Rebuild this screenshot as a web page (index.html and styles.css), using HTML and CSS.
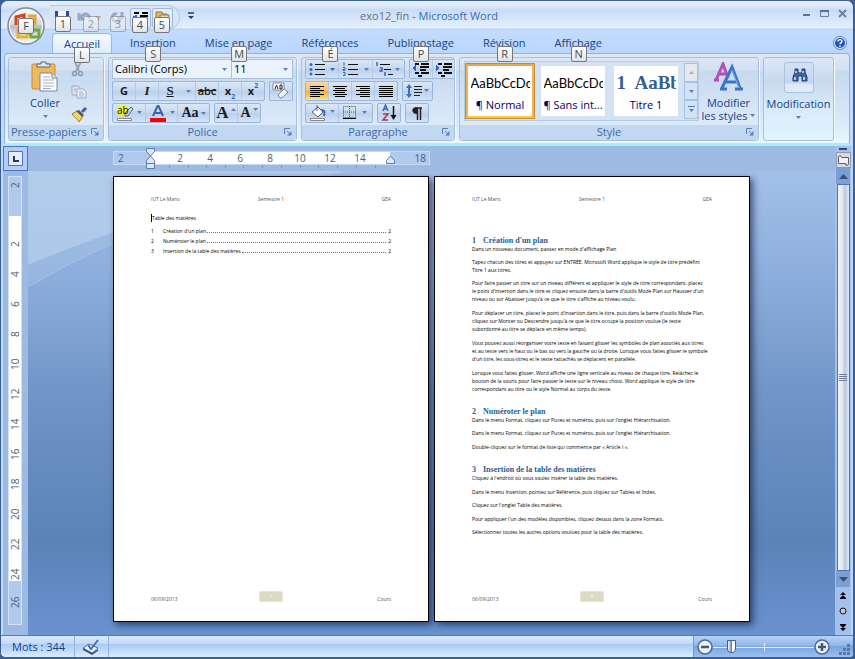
FILE: index.html
```html
<!DOCTYPE html>
<html lang="fr">
<head>
<meta charset="utf-8">
<title>exo12_fin - Microsoft Word</title>
<link rel="stylesheet" href="styles.css">
</head>
<body>
<div class="window">
  <header class="titlebar">
    <button class="office" aria-label="Bouton Office">
      <svg width="40" height="40" viewBox="0 0 40 40">
        <defs><linearGradient id="orb" x1="0" y1="0" x2="0" y2="1"><stop offset="0" stop-color="#fbfcfe"/><stop offset=".45" stop-color="#d3d9e3"/><stop offset=".5" stop-color="#b4bdcc"/><stop offset="1" stop-color="#f6f9fd"/></linearGradient></defs>
        <circle cx="20" cy="20" r="18" fill="url(#orb)" stroke="#7c8aa3" stroke-width="1.5"/>
        <circle cx="20" cy="20" r="16.5" fill="none" stroke="#fff"/>
        <g fill="none" stroke-width="3">
          <path d="M10 19v-8l8-2v4" stroke="#d8431c"/>
          <path d="M22 10h7v9" stroke="#e8a33a"/>
          <path d="M12 22v9h9v-8" stroke="#f2b21c"/>
          <path d="M24 24h9v7h-8z" stroke="#6cae35"/>
        </g>
      </svg>
      <span class="key">F</span>
    </button>
    <div class="qat">
      <button aria-label="Enregistrer"><svg width="16" height="16"><path d="M1 1h14v14H1z" fill="#3d3fae"/><path d="M4 1h8v7H4z" fill="#f4f6fb"/><path d="M4 11h8v4H4z" fill="#b9c6e4"/></svg><span class="key">1</span></button>
      <button class="off wide" aria-label="Annuler"><svg width="24" height="16"><path d="M2 3v6h6M3 8c4-6 10-5 9 1" fill="none" stroke="#9aa9c3" stroke-width="3"/><path d="M18 6h6l-3 4z" fill="#b3ad9c"/></svg><span class="key">2</span></button>
      <button class="off" aria-label="Rétablir"><svg width="16" height="16"><path d="M13 2v6H8M3 8c0-3 3-5 5-4M3 8c1 4 7 5 9 2" fill="none" stroke="#9aa9c3" stroke-width="3"/></svg><span class="key">3</span></button>
      <button class="framed" aria-label="Retrait"><svg width="18" height="16" shape-rendering="crispEdges"><path d="M2 3h5M10 3h6M8 6h8M8 9h8M2 12h14" stroke="#000" stroke-width="2"/><path d="M1 7h4M4 5v5" stroke="#2f62c8" stroke-width="2"/></svg><span class="key">4</span></button>
      <button class="framed" aria-label="Ouvrir"><svg width="16" height="16"><path d="M2 2h6l1 2h4v8H2z" fill="#e7b85a" stroke="#a9711c"/><path d="M6 5h9v8H6z" fill="#f7dc97" stroke="#6b7fae"/></svg><span class="key">5</span></button>
    </div>
    <button class="more" aria-label="Personnaliser"><svg width="7" height="8"><path d="M0 1h6" stroke="#1c3d78" stroke-width="1.5"/><path d="M0 4h6l-3 3z" fill="#1c3d78"/></svg></button>
    <h1><span>exo12_fin</span> - Microsoft Word</h1>
    <div class="sys">
      <button aria-label="Réduire"><svg width="10" height="10"><path d="M1 6h7" stroke="#5d6f8f" stroke-width="2"/></svg></button>
      <button aria-label="Agrandir"><svg width="10" height="10"><path d="M.5 1.500h8v6h-8z" fill="none" stroke="#6f809d"/><path d="M0 2h9" stroke="#5d6f8f" stroke-width="2"/></svg></button>
      <button aria-label="Fermer"><svg width="10" height="10"><path d="M1 1l7 7M8 1l-7 7" stroke="#6f809d" stroke-width="2"/></svg></button>
    </div>
  </header>

  <nav class="tabs">
    <button class="on">Accueil<span class="key">L</span></button>
    <button>Insertion<span class="key">S</span></button>
    <button>Mise en page<span class="key">M</span></button>
    <button>Références<span class="key">É</span></button>
    <button>Publipostage<span class="key">P</span></button>
    <button>Révision<span class="key">R</span></button>
    <button>Affichage<span class="key">N</span></button>
    <button class="help" aria-label="Aide"><svg width="14" height="14"><circle cx="7" cy="7" r="6.500" fill="#dfeaf9" stroke="#5a7fc4"/><circle cx="7" cy="7" r="5" fill="#1f55c8"/><path d="M5 5.500c0-2.500 4-2.500 4-.3 0 1.500-2 1.300-2 3M7 9.500v1.500" fill="none" stroke="#fff" stroke-width="1.400"/></svg></button>
  </nav>

  <section class="ribbon">
    <div class="group clip">
      <div class="body">
        <button class="big">
          <svg width="28" height="31"><rect x="1" y="3" width="23" height="25" rx="1" fill="#edb95b" stroke="#c68e35"/><path d="M6 6V3h4V1h5v2h4v3z" fill="#e3e6ea" stroke="#5f646c"/><path d="M9 12h12l5 5v13H9z" fill="#fff" stroke="#7384a6"/><path d="M21 12v5h5" fill="#dfe6f2" stroke="#7384a6"/><path d="M12 16h7M12 19h11M12 22h11M12 25h11M12 27.500h8" stroke="#a3adbf"/></svg>
          Coller
          <svg class="car" width="5" height="3"><path d="M0 0h5L2.500 3z"/></svg>
        </button>
        <div class="stack">
          <button aria-label="Couper"><svg width="14" height="15"><path d="M4 0l4 9M10 0L5 9" stroke="#9aa4b6" stroke-width="2"/><circle cx="3.500" cy="11.500" r="2" fill="none" stroke="#8b97b0" stroke-width="1.500"/><circle cx="9.500" cy="11.500" r="2" fill="none" stroke="#8b97b0" stroke-width="1.500"/></svg></button>
          <button aria-label="Copier"><svg width="16" height="14"><path d="M1 1h6l2 2v7H1z" fill="#dde5f1" stroke="#9eabc4"/><path d="M6 4h6l3 3v6H6z" fill="#eef3fa" stroke="#9eabc4"/><path d="M8 7h4M8 9h5M8 11h5M3 4h2M3 6h2" stroke="#9eabc4"/></svg></button>
          <button aria-label="Reproduire la mise en forme"><svg width="17" height="15"><path d="M1 7l5-3 6 5-4 6C6 11 3 10 1 7z" fill="#f3d766" stroke="#a67c1c"/><path d="M8 3l5 5-2 2-6-6z" fill="#555b68"/><path d="M11 5l4-4" stroke="#4b57a0" stroke-width="3"/></svg></button>
        </div>
      </div>
      <footer>Presse-papiers<button class="dlg" aria-label="Options"><svg width="8" height="8"><path d="M.5 6V.5H6M3 3l3 3" fill="none" stroke="#5f7fae"/><path d="M7.500 3v4.500H3L7.500 3z" fill="#5f7fae"/></svg></button></footer>
    </div>

    <div class="group police">
      <div class="body rows">
        <div class="row combos">
          <label class="combo"><select aria-label="Police"><option>Calibri (Corps)</option></select><svg class="car" width="5" height="3"><path d="M0 0h5L2.500 3z"/></svg></label>
          <label class="combo size"><select aria-label="Taille"><option>11</option></select><svg class="car" width="5" height="3"><path d="M0 0h5L2.500 3z"/></svg></label>
        </div>
        <div class="row">
          <div class="set">
            <button class="b">G</button><button class="i">I</button><button class="u"><u>S</u></button><button class="arr" aria-label="Soulignement"><svg class="car" width="5" height="3"><path d="M0 0h5L2.500 3z"/></svg></button><button class="s"><s>abc</s></button><button class="b">x<sub>2</sub></button><button class="b">x<sup>2</sup></button>
          </div>
          <div class="set"><button aria-label="Effacer la mise en forme"><svg width="18" height="18"><path d="M1 1h11v7H1z" fill="#fff" stroke="#7c8baa"/><path d="M3 7l1.500-4L6 7M8 3v4h2V3z" stroke="#222" fill="none"/><path d="M6 13l6-6 4 3-6 6H8z" fill="#eef1f7" stroke="#7684a4"/></svg></button></div>
        </div>
        <div class="row">
          <div class="set">
            <button class="w32" aria-label="Surbrillance"><svg width="26" height="17"><path d="M1 1h11v9H1z" fill="#f8f22c"/><path d="M9 8l6-6 2 2-5 7H9z" fill="#cdd8ea" stroke="#53627e"/><path d="M1.500 13.500h14v2h-14z" fill="#fff" stroke="#888"/><path d="M21 6h5l-2.500 3z" fill="#5b80b8"/><text x="1" y="9" class="tiny">ab</text></svg></button>
            <button class="w32" aria-label="Couleur de police"><svg width="26" height="17"><path d="M4 11L8.500 1h1L14 11M6 8h6" fill="none" stroke="#3c63a8" stroke-width="2"/><path d="M1 13h16v4H1z" fill="#f00"/><path d="M21 6h5l-2.500 3z" fill="#5b80b8"/></svg></button>
            <button class="w32 serif">Aa<svg class="car" width="5" height="3"><path d="M0 0h5L2.500 3z"/></svg></button>
          </div>
          <div class="set">
            <button class="serif grow">A<svg class="car tip" width="5" height="3"><path d="M0 3h5L2.500 0z"/></svg></button>
            <button class="serif shrink">A<svg class="car tip" width="5" height="3"><path d="M0 0h5L2.500 3z"/></svg></button>
          </div>
        </div>
      </div>
      <footer>Police<button class="dlg" aria-label="Options"><svg width="8" height="8"><path d="M.5 6V.5H6M3 3l3 3" fill="none" stroke="#5f7fae"/><path d="M7.500 3v4.500H3L7.500 3z" fill="#5f7fae"/></svg></button></footer>
    </div>

    <div class="group para">
      <div class="body rows">
        <div class="row">
          <div class="set">
            <button class="w32" aria-label="Puces"><svg width="26" height="14"><path d="M6 2.500h10M6 7.500h10M6 12.500h10" stroke="#111"/><g fill="#3d66b2"><circle cx="2" cy="2.500" r="1.500"/><circle cx="2" cy="7.500" r="1.500"/><circle cx="2" cy="12" r="1.500"/><path d="M21 6h5l-2.500 3z"/></g></svg></button>
            <button class="w35" aria-label="Numérotation"><svg width="28" height="15"><path d="M6 2.500h10M6 7.500h10M6 12.500h10" stroke="#111"/><path d="M2 0v4M1 5.500h2v2H1v1h2M1 10.500h2v3H1" fill="none" stroke="#3d66b2"/><path d="M22 6h5l-2.500 3z" fill="#5b80b8"/></svg></button>
            <button class="w32" aria-label="Liste à plusieurs niveaux"><svg width="28" height="15"><path d="M5 2.500h10M9 7.500h7M13 12.500h5" stroke="#111"/><path d="M2 0v4M5 6h2v3H5v-1M10 10v4" fill="none" stroke="#3d66b2" stroke-width="1.500"/><path d="M20 6h5l-2.500 3z" fill="#5b80b8"/></svg></button>
          </div>
          <div class="set">
            <button aria-label="Diminuer le retrait"><svg width="18" height="15" shape-rendering="crispEdges"><path d="M3 2h4M9 2h8M8 5h9M8 8h6M3 11h4M9 11h8M6 14h4" stroke="#111" stroke-width="2"/><path d="M0 6l4-3v6z" fill="#2f62c8"/></svg></button>
            <button aria-label="Augmenter le retrait"><svg width="18" height="15" shape-rendering="crispEdges"><path d="M3 2h4M9 2h8M8 5h9M8 8h6M3 11h4M9 11h8M6 14h4" stroke="#111" stroke-width="2"/><path d="M5 6L1 3v6z" fill="#2f62c8"/></svg></button>
          </div>
        </div>
        <div class="row">
          <div class="set">
            <button class="lit" aria-label="Gauche"><svg width="14" height="12" shape-rendering="crispEdges"><path d="M0 1h14M0 3h10M0 5h14M0 7h10M0 9h14M0 11h10" stroke="#000"/></svg></button>
            <button aria-label="Centrer"><svg width="14" height="12" shape-rendering="crispEdges"><path d="M0 1h14M2 3h10M0 5h14M2 7h10M0 9h14M2 11h10" stroke="#000"/></svg></button>
            <button aria-label="Droite"><svg width="14" height="12" shape-rendering="crispEdges"><path d="M0 1h14M4 3h10M0 5h14M4 7h10M0 9h14M4 11h10" stroke="#000"/></svg></button>
            <button aria-label="Justifier"><svg width="14" height="12" shape-rendering="crispEdges"><path d="M0 1h14M0 3h14M0 5h14M0 7h14M0 9h14M0 11h14" stroke="#000"/></svg></button>
          </div>
          <div class="set"><button class="w29" aria-label="Interligne"><svg width="24" height="16"><path d="M0 5l3-4 3 4H4v6h2l-3 4-3-4h2V5z" fill="#3d6fc4"/><path d="M8 3.500h8M8 6.500h8M8 9.500h8M8 12.500h6" stroke="#222"/><path d="M18 6h5l-2.500 3z" fill="#5b80b8"/></svg></button></div>
        </div>
        <div class="row">
          <div class="set">
            <button class="w32" aria-label="Trame de fond"><svg width="27" height="17"><path d="M3 7l6-5 5 5-5 5z" fill="#fff" stroke="#4e5d7c"/><path d="M8 6V0" stroke="#4e5d7c"/><path d="M12 5c4 0 4 2 3 6" fill="none" stroke="#3b69b8" stroke-width="2"/><path d="M1.500 13.500h14v2h-14z" fill="#fff" stroke="#888"/><path d="M21 5h5l-2.500 3z" fill="#5b80b8"/></svg></button>
            <button class="w35" aria-label="Bordures"><svg width="25" height="14"><path d="M.5 .5h12v11H.5zM6.500 0v12M0 6h13" fill="none" stroke="#44506a" stroke-dasharray="1 1"/><path d="M0 12.500h13" stroke="#000"/><path d="M19 5h5l-2.500 3z" fill="#5b80b8"/></svg></button>
          </div>
          <div class="set"><button aria-label="Trier"><svg width="17" height="18"><path d="M2 7l2.500-6L7 7M3 5h3" fill="none" stroke="#3d66b2" stroke-width="1.500"/><path d="M2 10h5l-5 6h5" fill="none" stroke="#a33b4c" stroke-width="1.500"/><path d="M12.500 2v11" stroke="#111" stroke-width="1.500"/><path d="M9.500 11h6l-3 5z" fill="#111"/></svg></button></div>
          <div class="set"><button aria-label="Afficher tout"><svg width="12" height="13"><path d="M6.500 1v12M9.500 1v12M5 1h6" stroke="#222" stroke-width="1.500"/><path d="M6 0C-.5 0 0 7 6 7z" fill="#222"/></svg></button></div>
        </div>
      </div>
      <footer>Paragraphe<button class="dlg" aria-label="Options"><svg width="8" height="8"><path d="M.5 6V.5H6M3 3l3 3" fill="none" stroke="#5f7fae"/><path d="M7.500 3v4.500H3L7.500 3z" fill="#5f7fae"/></svg></button></footer>
    </div>

    <div class="group style">
      <div class="body">
        <div class="gallery">
          <button class="sty on"><span class="demo">AaBbCcDc</span><span>¶ Normal</span></button>
          <button class="sty"><span class="demo">AaBbCcDc</span><span>¶ Sans int...</span></button>
          <button class="sty"><span class="demo title">1&nbsp; AaBb</span><span>Titre 1</span></button>
          <div class="spin">
            <button class="dim" aria-label="Précédent"><svg class="car" width="5" height="3"><path d="M0 3h5L2.500 0z"/></svg></button>
            <button aria-label="Suivant"><svg class="car" width="5" height="3"><path d="M0 0h5L2.500 3z"/></svg></button>
            <button aria-label="Tous les styles"><svg class="car" width="7" height="7"><path d="M0 0h7v1H0zM1 3h5L3.500 6z"/></svg></button>
          </div>
        </div>
        <button class="big mod">
          <svg width="30" height="29"><path d="M2 18L9 2l5 14M5 12h7M0 18h5" fill="none" stroke="#b04fb8" stroke-width="3"/><path d="M8 26L18 5l8 21M12 20h11M6 27h7M21 27h8" fill="none" stroke="#3d74c6" stroke-width="3"/><path d="M18 8l7 18" stroke="#86b0ea"/></svg>
          Modifier
          <span>les styles <svg class="car" width="5" height="3"><path d="M0 0h5L2.500 3z"/></svg></span>
        </button>
      </div>
      <footer>Style<button class="dlg" aria-label="Options"><svg width="8" height="8"><path d="M.5 6V.5H6M3 3l3 3" fill="none" stroke="#5f7fae"/><path d="M7.500 3v4.500H3L7.500 3z" fill="#5f7fae"/></svg></button></footer>
    </div>

    <div class="group edit">
      <button class="big">
        <span class="tile"><svg width="16" height="14"><path d="M3 1h3v3l1 1h2l1-1V1h3v3l2 5v4h-5V8H6v5H1V9l2-5z" fill="#41639f" stroke="#274073"/><path d="M3 9v3M12 9v3M4 3v2M11 3v2" stroke="#dbe6f7" stroke-width="1.500"/></svg></span>
        Modification
        <svg class="car" width="5" height="3"><path d="M0 0h5L2.500 3z"/></svg>
      </button>
    </div>
  </section>

  <main>
    <aside class="left">
      <button class="tabsel" aria-label="Tabulation"><svg width="15" height="15"><path d="M.5 .5h14v14H.5z" fill="#e6effb" stroke="#4a74c8"/><path d="M6 5v5h5" fill="none" stroke="#1f3b66" stroke-width="2"/></svg></button>
      <div class="vruler">
        <div class="margin"><span>2</span></div>
        <div class="live"><span>2</span><span>4</span><span>6</span><span>8</span><span>10</span><span>12</span><span>14</span><span>16</span><span>18</span><span>20</span><span>22</span><span>24</span></div>
        <div class="margin end"><span>26</span></div>
      </div>
    </aside>

    <div class="center">
      <div class="hbar">
        <div class="hwrap">
          <div class="hruler">
            <span class="margin">2</span>
            <div class="live"><span>2</span><span>4</span><span>6</span><span>8</span><span>10</span><span>12</span><span>14</span></div>
            <span class="margin end">18</span>
            <svg class="marks" width="317" height="22"><g stroke="#8a97ad"><path d="M56.500 17v3M75.500 17v3M93.500 17v3M112.500 17v3M130.500 17v3M149.500 17v3M168.500 17v3M187.500 17v3M205.500 17v3M224.500 17v3M243.500 17v3M262.500 17v3"/></g><g fill="#dfe8f5" stroke="#5a7cb4"><path d="M33.500 .5h8v3l-4 4.500-4-4.500z"/><path d="M33.500 15.500v-3l4-4.500 4 4.500v3z"/><path d="M33.500 15.500h8v5h-8z"/><path d="M273.500 15.500v-3l4-4.500 4 4.500v3z"/></g></svg>
          </div>
        </div>
      </div>
      <div class="desk">
        <svg class="swoosh" width="420" height="116"><path d="M0 0h320Q150 32 0 94z" fill="#b7d0ec" opacity=".75"/><path d="M0 94Q150 32 320 0h40Q150 26 0 116z" fill="#a3bfe4" opacity=".5"/><path d="M0 116Q150 26 360 0" fill="none" stroke="#b4cdf0" opacity=".6"/></svg>
        <article class="page">
          <div class="head"><span>IUT Le Mans</span><span>Semestre 1</span><span>GEA</span></div>
          <div class="text">
            <p class="tochead"><i></i>Table des matières</p>
            <ol class="toc">
              <li><span>1</span><a href="#s1">Création d'un plan</a><b></b><span>2</span></li>
              <li><span>2</span><a href="#s2">Numéroter le plan</a><b></b><span>2</span></li>
              <li><span>3</span><a href="#s3">Insertion de la table des matières</a><b></b><span>2</span></li>
            </ol>
          </div>
          <div class="foot"><span>06/09/2013</span><span class="num">1</span><span>Cours</span></div>
        </article>
        <article class="page">
          <div class="head"><span>IUT Le Mans</span><span>Semestre 1</span><span>GEA</span></div>
          <div class="text two">
            <h2 id="s1"><span>1</span>Création d'un plan</h2>
            <p class="tight">Dans un nouveau document, passez en mode d'affichage Plan</p>
            <p class="tight">Tapez chacun des titres et appuyez sur ENTRÉE. Microsoft Word applique le style de titre prédéfini<br>Titre 1 aux titres.</p>
            <p>Pour faire passer un titre sur un niveau différent et appliquer le style de titre correspondant, placez<br>le point d'insertion dans le titre et cliquez ensuite dans la barre d'outils Mode Plan sur Hausser d'un<br>niveau ou sur Abaisser jusqu'à ce que le titre s'affiche au niveau voulu.</p>
            <p>Pour déplacer un titre, placez le point d'insertion dans le titre, puis dans la barre d'outils Mode Plan,<br>cliquez sur Monter ou Descendre jusqu'à ce que le titre occupe la position voulue (le texte<br>subordonné au titre se déplace en même temps).</p>
            <p>Vous pouvez aussi réorganiser votre texte en faisant glisser les symboles de plan associés aux titres<br>et au texte vers le haut ou le bas ou vers la gauche ou la droite. Lorsque vous faites glisser le symbole<br>d'un titre, les sous-titres et le texte rattachés se déplacent en parallèle.</p>
            <p>Lorsque vous faites glisser, Word affiche une ligne verticale au niveau de chaque titre. Relâchez le<br>bouton de la souris pour faire passer le texte sur le niveau choisi. Word applique le style de titre<br>correspondant au titre ou le style Normal au corps du texte.</p>
            <h2 id="s2"><span>2</span>Numéroter le plan</h2>
            <p class="tight">Dans le menu Format, cliquez sur Puces et numéros, puis sur l'onglet Hiérarchisation.</p>
            <p>Dans le menu Format, cliquez sur Puces et numéros, puis sur l'onglet Hiérarchisation.</p>
            <p>Double-cliquez sur le format de liste qui commence par « Article I ».</p>
            <h2 id="s3"><span>3</span>Insertion de la table des matières</h2>
            <p>Cliquez à l'endroit où vous voulez insérer la table des matières.</p>
            <p class="tight">Dans le menu Insertion, pointez sur Référence, puis cliquez sur Tables et Index.</p>
            <p>Cliquez sur l'onglet Table des matières.</p>
            <p class="tight">Pour appliquer l'un des modèles disponibles, cliquez dessus dans la zone Formats.</p>
            <p>Sélectionnez toutes les autres options voulues pour la table des matières.</p>
          </div>
          <div class="foot"><span>06/09/2013</span><span class="num">2</span><span>Cours</span></div>
        </article>
      </div>
    </div>

    <aside class="scroll">
      <span class="split"></span>
      <button class="view" aria-label="Règle"><svg width="13" height="13"><path d="M1.500 2.500l2-1 1 2h7v7l-2 1-1-2h-7z" fill="#f7f1f4" stroke="#5b5f72"/><path d="M7 9l3 3" stroke="#5b5f72"/></svg></button>
      <button class="up" aria-label="Haut"><svg width="9" height="5"><path d="M0 5h9L4.500 0z" fill="#3c4f7c"/></svg></button>
      <div class="thumb"><span></span></div>
      <button class="up" aria-label="Bas"><svg width="9" height="5"><path d="M0 0h9L4.500 5z" fill="#3c4f7c"/></svg></button>
      <button class="nav" aria-label="Page précédente"><svg width="6" height="7"><path d="M3 0l3 3H0zM3 3l3 3H0zM0 6h6v1H0z"/></svg></button>
      <button class="nav" aria-label="Objet"><svg width="8" height="8"><circle cx="4" cy="4" r="3" fill="#c9c9c9" stroke="#111"/></svg></button>
      <button class="nav" aria-label="Page suivante"><svg width="6" height="7"><path d="M0 0h6v1H0zM0 1h6L3 4zM0 4h6L3 7z"/></svg></button>
    </aside>
  </main>

  <footer class="status">
    <button class="words">Mots : 344</button>
    <button class="proof" aria-label="Vérification"><svg width="18" height="16"><path d="M1 9l6-4 9 4-6 5z" fill="#f3f6fc" stroke="#5a6c96"/><path d="M1 10l9 5 6-4" fill="none" stroke="#3c4f7c" stroke-width="1.500"/><path d="M6 6l3 4 7-9" fill="none" stroke="#3f6fd0" stroke-width="2"/></svg></button>
    <div class="zoom">
      <button aria-label="Zoom arrière"><svg width="16" height="16"><circle cx="8" cy="8" r="7" fill="#e9f1fc" stroke="#4c689c" stroke-width="1.500"/><path d="M4 8h8" stroke="#44577f" stroke-width="2.500"/></svg></button>
      <input type="range" aria-label="Zoom" min="0" max="100" value="15">
      <button aria-label="Zoom avant"><svg width="16" height="16"><circle cx="8" cy="8" r="7" fill="#e9f1fc" stroke="#4c689c" stroke-width="1.500"/><path d="M4 8h8M8 4v8" stroke="#44577f" stroke-width="2.500"/></svg></button>
      <svg class="grip" width="11" height="11"><path d="M8 0h3v3H8zM4 4h3v3H4zM8 4h3v3H8zM0 8h3v3H0zM4 8h3v3H4zM8 8h3v3H8z" fill="#5877ab"/></svg>
    </div>
  </footer>
</div>
</body>
</html>
```
FILE: styles.css
```css
* { box-sizing: border-box; margin: 0; padding: 0; }
html, body { height: 100%; }
body {
  background: #3d6191;
  font: 11px/14px "Open Sans", "Noto Sans", sans-serif;
  color: #15428b;
}
button { font: inherit; color: inherit; background: none; border: 0; }
svg { display: block; }
.car { fill: #5b80b8; flex: none; }
.tiny { font: 10px "Open Sans", sans-serif; fill: #111; }

.window {
  height: 100vh;
  display: flex;
  flex-direction: column;
  border: 1px solid #3b5f94;
  border-width: 1px 2px 2px 1px;
  border-radius: 8px 8px 6px 6px;
  overflow: hidden;
  background: #bfdbff;
}

/* title bar */
.titlebar {
  position: relative;
  z-index: 3;
  height: 29px;
  flex: none;
  display: flex;
  align-items: flex-start;
  background: linear-gradient(#e8f0fb, #dbe7f8 20%, #c9dcf5 30%, #e3effd 92%, #a9cbf3);
}
.titlebar h1 {
  position: absolute;
  left: 0;
  right: 0;
  top: 8px;
  padding-left: 4px;
  text-align: center;
  font-size: 11px;
  font-weight: 400;
  color: #3c68b4;
  pointer-events: none;
}
.titlebar h1 span { color: #696f7c; }
.key {
  position: absolute;
  width: 16px;
  height: 16px;
  line-height: 14px;
  text-align: center;
  color: #4a4a4a;
  background: linear-gradient(#fff, #dfe3ea);
  border: 1px solid #767676;
  border-radius: 2px;
}
.office { position: relative; margin: 5px 0 0 5px; width: 40px; height: 40px; }
.office .key { left: 12px; top: 12px; }
.qat {
  display: flex;
  gap: 1px;
  height: 25px;
  margin: 4px 0 0 4px;
  padding: 2px 6px 0 2px;
  border: 1px solid #b5c9e6;
  border-left: 0;
  border-radius: 0 13px 13px 0;
  background: #d7e5f7;
}
.qat button { position: relative; width: 22px; height: 20px; padding: 1px 2px; }
.qat .wide { width: 31px; }
.qat .key { left: 3px; top: 8px; }
.qat .wide .key { left: 8px; }
.qat .off .key { opacity: .5; }
.qat .framed { width: 21px; border: 1px solid #9db9de; border-radius: 2px; background: #e3edfa; padding: 0 1px; }
.qat .framed .key { left: 1px; }
.more { margin: 11px 0 0 8px; }
.sys { margin: 8px 5px 0 auto; display: flex; gap: 8px; }

/* tabs */
.tabs {
  position: relative;
  z-index: 2;
  height: 23px;
  flex: none;
  display: flex;
  padding: 3px 6px 0 51px;
  background: linear-gradient(#c3dcff, #bad6fb);
}
.tabs button { position: relative; padding: 0 15px 0 14px; height: 20px; }
.tabs button:first-child { padding: 0 11px; margin-right: 4px; }
.tabs .on {
  border: 1px solid #96bce9;
  border-bottom: 0;
  border-radius: 4px 4px 0 0;
  background: linear-gradient(#f4fafe, #e0ecf9);
  box-shadow: inset 0 0 2px #b7f2fb;
}
.tabs .key { left: calc(50% - 8px); top: 13px; }
.tabs .help { margin-left: auto; padding: 0; }

/* ribbon */
.ribbon {
  height: 92px;
  flex: none;
  display: flex;
  gap: 4px;
  margin: 0 3px 1px 3px;
  padding: 3px 15px 2px 3px;
  border: 1px solid #8db2e3;
  border-bottom: 2px solid #a9eef8;
  border-radius: 4px;
  background: linear-gradient(#dee9f7, #d2e0f2 18%, #c7d9ee 20%, #dcebf9 80%, #e9f7ff);
}
.group {
  display: flex;
  flex-direction: column;
  border: 1px solid #a5c0e0;
  border-radius: 3px;
  box-shadow: 1px 1px 0 #f2f8fe;
  overflow: hidden;
}
.clip { width: 96px; }
.police { width: 189px; }
.para { width: 154px; }
.style { flex: 1; }
.edit { width: 71px; background: linear-gradient(#dbe7f6, #c8d9ee 30%, #d9eafa 60%, #dff5fd); }
.body { flex: 1; display: flex; }
.group footer {
  position: relative;
  height: 15px;
  flex: none;
  text-align: center;
  background: #c1d8f0;
  color: #3e6aaa;
}
.clip footer { text-align: left; padding-left: 2px; }
.dlg { position: absolute; right: 4px; top: 3px; }
.big { display: flex; flex-direction: column; align-items: center; }
.clip .big { width: 52px; margin-left: 10px; padding-top: 3px; gap: 4px; }
.clip .big .car { margin-top: 1px; }
.stack { display: flex; flex-direction: column; gap: 8px; padding-top: 4px; }

.rows { flex-direction: column; gap: 2px; padding: 1px 3px 0; }
.row { display: flex; gap: 4px; height: 20px; }
.combos { gap: 0; }
.combo {
  flex: 1;
  display: flex;
  align-items: center;
  padding: 0 4px 0 2px;
  background: #eaf2fb;
  border: 1px solid #abc1de;
}
.combo.size { flex: none; width: 61px; border-left: 0; }
.combo select {
  appearance: none;
  flex: 1;
  min-width: 0;
  border: 0;
  background: none;
  font: inherit;
  color: #000;
}
.set {
  display: flex;
  border: 1px solid #9ab6dc;
  border-radius: 2px;
  background: linear-gradient(#dbe7f7, #c4d7ef 50%, #b9d0ec 52%, #d3e3f6);
}
.set button {
  position: relative;
  width: 22px;
  display: flex;
  align-items: center;
  justify-content: center;
  color: #1b1b1b;
}
.set button + button { border-left: 1px solid #b3c9e6; width: 23px; }
.set .w32, .set .w32 + .w32 { width: 32px; }
.set .w35.w35 { width: 34px; }
.set .w29 { width: 29px; }
.set .arr.arr { width: 14px; border: 0; }
.b { font-weight: 700; }
.i { font: italic 700 13px "Liberation Serif", serif; }
.u { font: 700 13px "Liberation Serif", serif; }
.set .s { font-weight: 600; }
.set sub, .set sup { font-size: 7px; line-height: 7px; color: #2f62c8; }
.set sub { align-self: flex-end; }
.set sup { align-self: flex-start; }
.serif { font: 700 14px "Liberation Serif", serif; gap: 3px; }
.grow { font-size: 17px; }
.set .serif { gap: 2px; }
.set .tip { align-self: flex-start; margin-top: 4px; }
.set .lit { background: linear-gradient(#fbd9a1, #fcc067 50%, #fbab3f 52%, #fee28c); }

/* style gallery */
.gallery {
  display: flex;
  gap: 3px;
  flex: 1;
  margin: 3px 0 4px 4px;
  padding: 1px 0 1px 0;
  border: 1px solid #b6cbe6;
  background: #d4e3f4;
}
.sty {
  width: 70px;
  display: flex;
  flex-direction: column;
  justify-content: center;
  align-items: center;
  gap: 6px;
  padding-top: 4px;
  border: 3px solid transparent;
  background: #fff padding-box;
  color: #00006a;
  white-space: nowrap;
  overflow: hidden;
}
.sty.on { border-color: #e9a64b #f0b54c #fbc934; outline: 1px solid #c28a3c; outline-offset: -1px; }
.demo {
  width: 59px;
  overflow: hidden;
  font: 13px/18px Lato, sans-serif;
  color: #000;
  text-align: left;
}
.demo.title { font: 700 19px/18px "Liberation Serif", serif; color: #365f91; }
.spin { margin-left: auto; width: 14px; display: flex; flex-direction: column; }
.spin button { flex: 1; display: grid; place-items: center; border: 1px solid #a9c2e2; background: #d3e3f6; }
.spin .dim { background: #e6e8ec; }
.dim .car { fill: #a5adba; }
.mod { width: 64px; padding-top: 4px; gap: 0; line-height: 13px; }
.mod svg:first-child { margin-bottom: 5px; }
.mod span { display: flex; align-items: center; gap: 3px; }
.mod span svg.car { margin-bottom: 0; }
.edit .big { padding-top: 4px; }
.tile {
  width: 30px;
  height: 31px;
  padding: 5px 7px;
  margin-bottom: 4px;
  border: 1px solid #aac1df;
  border-radius: 3px;
  background: linear-gradient(#d4e2f3, #c3d6ee 70%, #dfeafa 72%);
}
.edit .car { margin-top: 5px; }

/* workspace */
main { flex: 1; min-height: 0; display: flex; margin-left: 2px; }
.left { width: 25px; flex: none; background: #9cbae2; display: flex; flex-direction: column; }
.tabsel { width: 25px; height: 25px; padding: 4px; border: 1px solid #4a74c8; background: #b4cdf0; flex: none; }
.vruler {
  width: 14px;
  flex: 1;
  margin: 5px 0 10px 5px;
  display: flex;
  flex-direction: column;
  border: 1px solid #d3e1f5;
  background: #b0c9ec;
  font-size: 10px;
  color: #4f5e78;
  overflow: hidden;
}
.vruler span {
  height: 30px;
  flex: none;
  writing-mode: vertical-rl;
  transform: rotate(180deg);
  text-align: center;
  line-height: 12px;
}
.vruler .margin { height: 39px; flex: none; display: flex; flex-direction: column; }
.vruler .margin span { height: 16px; }
.vruler .live { flex: 1; min-height: 0; padding-top: 13px; background: #fff; display: flex; flex-direction: column; }
.vruler .end.end { height: 43px; padding-top: 13px; }

.center { flex: 1; min-width: 0; display: flex; flex-direction: column; }
.hbar { height: 25px; flex: none; display: flex; justify-content: center; background: #9cbae2; }
.hwrap { width: 637px; }
.hruler {
  position: relative;
  width: 317px;
  height: 14px;
  margin-top: 5px;
  display: flex;
  border: 1px solid #c8daf3;
  background: #b0c9ec;
  font-size: 10px;
  line-height: 12px;
  color: #4f5e78;
}
.hruler .margin { width: 36px; padding-left: 4px; }
.hruler .live { width: 240px; padding-left: 15px; display: flex; background: #fff; }
.hruler .live span { width: 30px; text-align: center; }
.hruler .end { flex: 1; padding: 0 3px 0 0; text-align: right; }
.marks { position: absolute; left: -1px; top: -4px; }

.desk {
  position: relative;
  flex: 1;
  min-height: 0;
  display: flex;
  justify-content: center;
  align-items: flex-start;
  gap: 5px;
  padding-top: 5px;
  overflow: hidden;
  background: linear-gradient(#a2c0e9, #8fb0de 20%, #7095c6 48%, #5b83b8 80%, #6992d0);
}
.swoosh { position: absolute; left: 0; top: 0; }
.page {
  position: relative;
  width: 316px;
  height: 446px;
  flex: none;
  display: flex;
  flex-direction: column;
  padding: 18px 37px;
  border: 1px solid #000;
  background: #fff;
  box-shadow: 3px 3px 7px rgba(10, 25, 60, .65);
  color: #000;
  font: 5px/8px "Open Sans", sans-serif;
}
.head, .foot { display: grid; grid-template-columns: 1fr auto 1fr; color: #555; }
.head > :last-child, .foot > :last-child { text-align: right; }
.foot { margin-top: auto; }
.num {
  width: 24px;
  height: 11px;
  margin-top: -4px;
  border: 1px solid #e9e5d5;
  border-radius: 2px;
  background: #ddd9c3;
  color: #fff;
  text-align: center;
}
.text { padding-top: 11px; }
.text.two { padding-top: 33px; }
.text p { margin-bottom: 6px; white-space: nowrap; }
.text .tight { margin-bottom: 5px; }
.text .tochead { margin-bottom: 4px; }
.tochead i { float: left; width: 1px; height: 8px; background: #000; }
.toc { list-style: none; line-height: 10px; }
.toc li { display: flex; }
.toc li > span:first-child { width: 12px; }
.toc a { color: #000; text-decoration: none; }
.toc b { flex: 1; height: 7px; margin: 0 2px 0 1px; border-bottom: 1px dotted #c0504d; }
h2 { display: flex; font: 700 8px/9px "Liberation Serif", serif; color: #2a5c97; }
h2 span { width: 11px; }
p + h2 { margin-top: 14px; }

/* scroll bar */
.scroll { width: 18px; flex: none; display: flex; flex-direction: column; align-items: center; background: #a3c1ee; border-right: 2px solid #bed5f7; }
.split { width: 8px; height: 2px; margin: 2px 0; background: #34476f; flex: none; }
.view { width: 15px; height: 16px; border: 1px solid #8d97ae; background: #d5d9e2; flex: none; }
.up { width: 14px; height: 16px; display: grid; place-items: center; background: #7b9fd2; flex: none; }
.thumb {
  flex: 1;
  width: 13px;
  display: grid;
  place-items: center;
  border: 1px solid #4f74b0;
  background: linear-gradient(90deg, #f3f7fb, #dfe6ee 45%, #b9c9dc 60%, #dce9f8);
}
.thumb span { width: 8px; height: 8px; background: repeating-linear-gradient(#6d7f9c 0 1px, transparent 1px 2px); }
.nav { height: 16px; display: grid; place-items: center; flex: none; }

/* status bar */
.status {
  height: 22px;
  flex: none;
  display: flex;
  border-top: 1px solid #567db0;
  background: linear-gradient(#d9e8fb, #c4dbf8 35%, #a9cbf5 40%, #c5defa 75%, #dcecff);
}
.words { padding: 0 9px 0 11px; border-right: 1px solid #92b1dc; }
.proof { width: 34px; padding: 2px 7px; border-right: 1px solid #92b1dc; }
.zoom {
  margin-left: auto;
  display: flex;
  align-items: center;
  padding: 0 3px 0 3px;
  border-left: 1px solid #7597ca;
  background: linear-gradient(#b7d2f6, #92b7ea 45%, #7ba3dc 50%, #9cc0f0);
}
.zoom input {
  appearance: none;
  width: 101px;
  height: 16px;
  background:
    linear-gradient(#e4eefb, #e4eefb) 51px 4px / 1px 8px no-repeat,
    linear-gradient(#e4eefb, #e4eefb) 0 8px / 100% 1px no-repeat;
}
.zoom input::-webkit-slider-thumb {
  appearance: none;
  width: 9px;
  height: 13px;
  background: linear-gradient(90deg, #fff, #6886b8 50%, #fff 55%);
  border: 1px solid #3f5e93;
  border-radius: 1px 1px 5px 5px;
}
.grip { margin: 6px 0 0 9px; }
```
